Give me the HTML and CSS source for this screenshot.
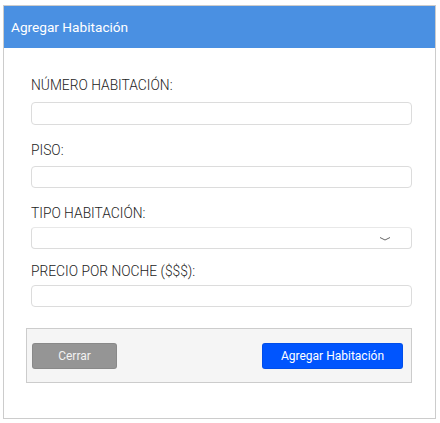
FILE: index.html
```html
<!DOCTYPE html>
<html lang="es">
<head>
<meta charset="utf-8">
<title>Agregar Habitación</title>
<link rel="stylesheet" href="styles.css">
</head>
<body>
<div class="modal">
  <div class="modal-header">Agregar Habitación</div>
  <div class="modal-body">
    <div class="field field-1">
      <label class="field-label">NÚMERO HABITACIÓN:</label>
      <div class="input"></div>
    </div>
    <div class="field field-2">
      <label class="field-label">PISO:</label>
      <div class="input"></div>
    </div>
    <div class="field field-3">
      <label class="field-label">TIPO HABITACIÓN:</label>
      <div class="input select">
        <svg class="chevron" width="12" height="6" viewBox="0 0 12 6"><path d="M1 1.5 L6 4 L11 1.5" fill="none" stroke="#666" stroke-width="1"/></svg>
      </div>
    </div>
    <div class="field field-4">
      <label class="field-label">PRECIO POR NOCHE ($$$):</label>
      <div class="input"></div>
    </div>
    <div class="modal-footer">
      <button class="btn btn-close">Cerrar</button>
      <button class="btn btn-primary">Agregar Habitación</button>
    </div>
  </div>
</div>
</body>
</html>
```
FILE: styles.css
```css
html, body {
  margin: 0;
  padding: 0;
  background: #fff;
  font-family: Roboto, "Liberation Sans", Arial, sans-serif;
}
.modal {
  margin: 5px 0 0 3px;
  width: 433px;
  height: 414px;
  box-sizing: border-box;
  border: 1px solid #cccccc;
  background: #fff;
}
.modal-header {
  height: 42px;
  background: #4a90e2;
  color: #fff;
  font-size: 13.65px;
  line-height: 42px;
  padding-left: 7px;
}
.modal-body {
  padding: 30px 23px 0 27px;
}
.field {
  display: flex;
  flex-direction: column;
}
.field-label {
  font-size: 13.8px;
  font-weight: 300;
  line-height: 15px;
  color: #222;
}
.input {
  height: 23px;
  box-sizing: border-box;
  border: 1px solid #dcdcdc;
  border-radius: 4px;
  background: #fff;
}
.field-1 .input { margin-top: 9px; }
.field-2 { margin-top: 18px; }
.field-2 .input { margin-top: 8px; height: 22px; }
.field-3 { margin-top: 18px; }
.field-3 .input { margin-top: 6px; height: 22px; }
.field-4 { margin-top: 15px; }
.field-4 .input { margin-top: 6px; height: 22px; }
.select {
  display: flex;
  align-items: center;
  justify-content: flex-end;
  padding-right: 20px;
  border-top-color: #e8e8e8;
}
.chevron { display: block; margin-top: 1px; }
.modal-footer {
  margin: 21px 0 0 -5px;
  height: 55px;
  box-sizing: border-box;
  border: 1px solid #cccccc;
  background: #f5f5f5;
  display: flex;
  align-items: center;
  justify-content: space-between;
  padding: 0 8px 0 5px;
}
.btn {
  height: 26px;
  border: 1px solid rgba(0,0,0,0.08);
  border-radius: 3px;
  font-family: Roboto, "Liberation Sans", Arial, sans-serif;
  font-size: 12px;
  color: #f2f2f2;
  padding: 0;
  cursor: pointer;
}
.btn-close {
  width: 85px;
  background: #959595;
}
.btn-primary {
  width: 141px;
  background: #0055fe;
  color: #fff;
}
```
